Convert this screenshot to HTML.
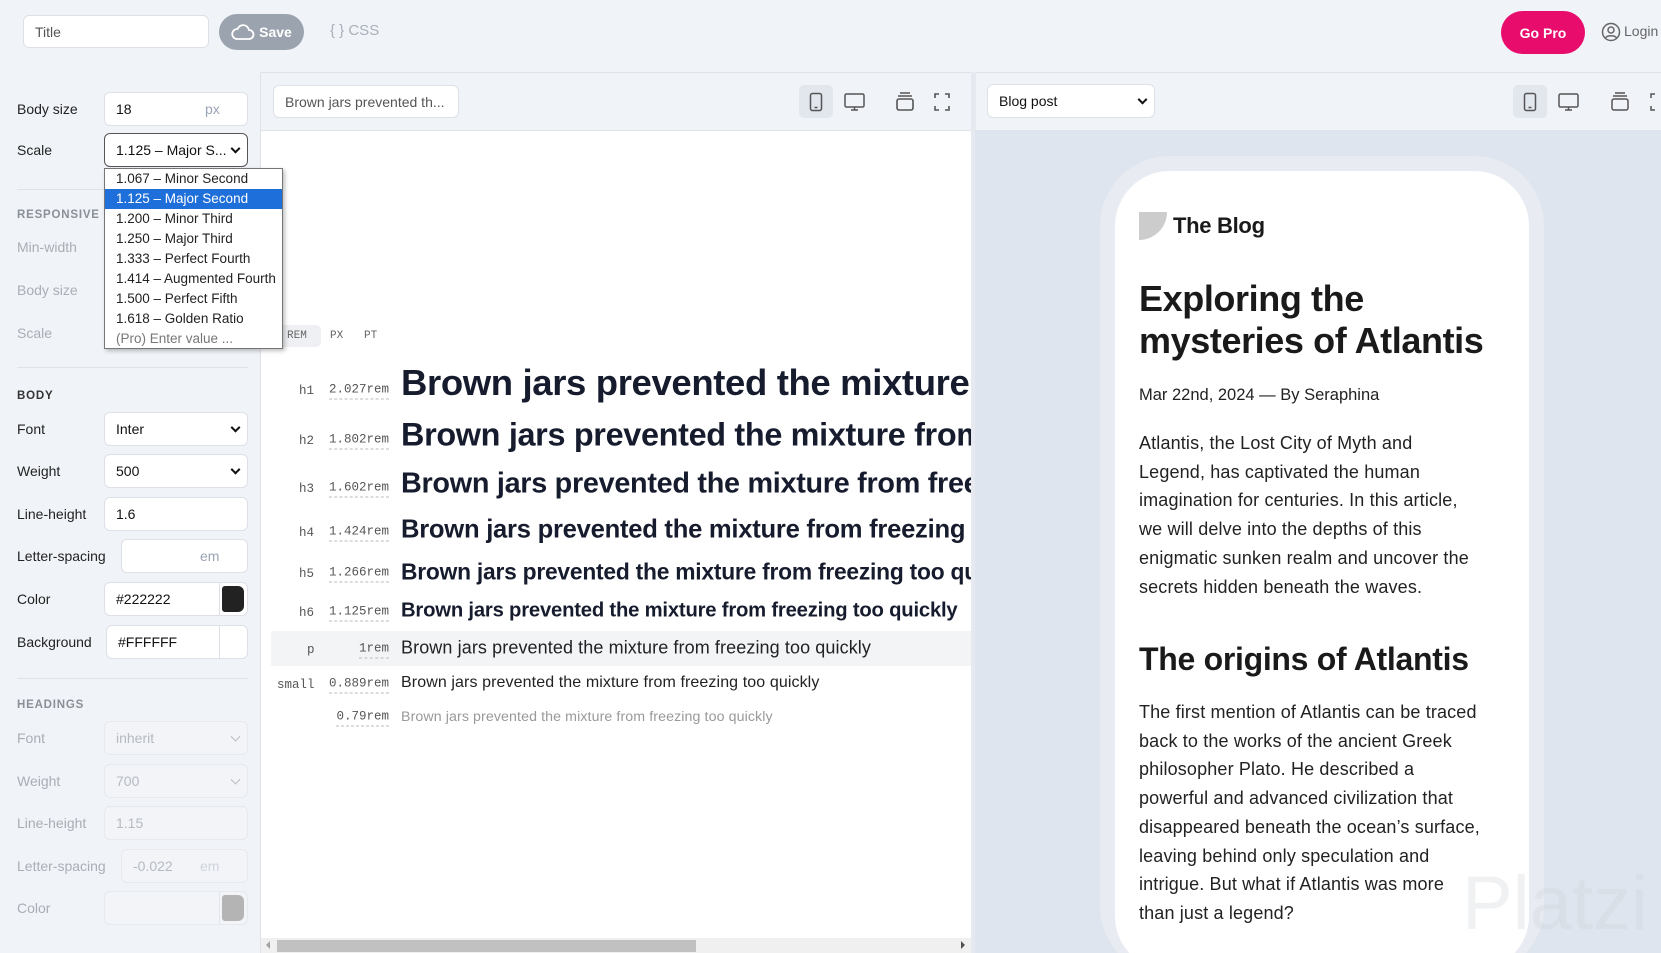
<!DOCTYPE html>
<html style="overflow:hidden;height:953px"><head><meta charset="utf-8"><style>
*{box-sizing:border-box;margin:0;padding:0}
body{width:1661px;height:953px;overflow:hidden;background:#f0f3f8;font-family:"Liberation Sans",sans-serif;position:relative;color:#222}
.abs{position:absolute}
.inp{position:absolute;background:#fff;border:1px solid #dde1e7;border-radius:6px;height:34px;font-size:14px;color:#111;padding:0 11px;display:flex;align-items:center}
.dis{background:#f2f4f8;border-color:#e6e9ee;color:#b5bac2}
.lab{position:absolute;left:17px;font-size:14px;color:#222;transform:translateY(-50%)}
.lab.g{color:#a9aeb6}
.sec{position:absolute;left:17px;font-size:11.5px;letter-spacing:0.8px;font-weight:bold;color:#333}
.hr{position:absolute;left:17px;width:231px;height:1px;background:#dfe3e9}
.chev{position:absolute;right:8px;top:50%;width:7px;height:7px;border-right:2px solid #111;border-bottom:2px solid #111;transform:translateY(-70%) rotate(45deg)}
.dis .chev{border-color:#bbb;border-width:1.5px}
.tag{position:absolute;font-family:"Liberation Mono",monospace;font-size:12.5px;color:#555;transform:translateY(-50%)}
.rem{position:absolute;font-family:"Liberation Mono",monospace;font-size:12.5px;color:#555;right:611px;transform:translateY(-50%);border-bottom:1px dashed #bbb;padding-bottom:2px;white-space:nowrap}
.tx{position:absolute;left:401px;white-space:nowrap;color:#161c2d;transform:translateY(-50%);font-weight:bold;letter-spacing:-0.01em}
.pl{position:absolute;left:1139px;font-size:18px;line-height:28.7px;color:#222;width:390px;letter-spacing:0.15px}
</style></head><body>
<div class="inp" style="left:23px;top:15px;width:186px;height:33px;color:#555;font-size:14px">Title</div>
<div class="abs" style="left:219px;top:14px;width:85px;height:36px;border-radius:18px;background:#9ba3ae;color:#fff;font-weight:bold;font-size:14px;display:flex;align-items:center;justify-content:center;gap:4px">
<svg width="24" height="18" viewBox="0 0 24 18"><path d="M6 16h12a4.5 4.5 0 0 0 0-9 6 6 0 0 0-11.5-1A5 5 0 0 0 6 16z" fill="none" stroke="#fff" stroke-width="1.8"/></svg>Save</div>
<div class="abs" style="left:330px;top:22px;font-size:15px;color:#aab0ba">{ } CSS</div>
<div class="abs" style="left:1501px;top:11px;width:84px;height:43px;border-radius:22px;background:#e80c6c;color:#fff;font-weight:bold;font-size:14px;display:flex;align-items:center;justify-content:center">Go Pro</div>
<svg class="abs" style="left:1601px;top:22px" width="20" height="20" viewBox="0 0 20 20"><circle cx="10" cy="10" r="8.5" fill="none" stroke="#666" stroke-width="1.5"/><circle cx="10" cy="8" r="3" fill="none" stroke="#666" stroke-width="1.5"/><path d="M4.5 16c1.5-3 9.5-3 11 0" fill="none" stroke="#666" stroke-width="1.5"/></svg>
<div class="abs" style="left:1624px;top:23px;font-size:14px;color:#666">Login</div>
<div class="abs" style="left:260px;top:72px;width:1401px;height:1px;background:#dfe3e9"></div>

<div class="lab" style="top:109px">Body size</div>
<div class="inp" style="left:104px;top:92px;width:144px">18<span style="position:absolute;left:100px;color:#9aa3b5">px</span></div>
<div class="lab" style="top:150px">Scale</div>
<div class="inp" style="left:104px;top:133px;width:144px;border-color:#555;border-width:1.5px">1.125 – Major S...<span class="chev"></span></div>
<div class="hr" style="top:189px"></div>
<div class="sec" style="top:209px;color:#8a8f98">RESPONSIVE</div>
<div class="lab g" style="top:247px">Min-width</div>
<div class="lab g" style="top:290px">Body size</div>
<div class="lab g" style="top:333px">Scale</div>
<div class="hr" style="top:367px"></div>
<div class="sec" style="top:390px">BODY</div>
<div class="lab" style="top:429px">Font</div>
<div class="inp" style="left:104px;top:412px;width:144px">Inter<span class="chev"></span></div>
<div class="lab" style="top:471px">Weight</div>
<div class="inp" style="left:104px;top:454px;width:144px">500<span class="chev"></span></div>
<div class="lab" style="top:514px">Line-height</div>
<div class="inp" style="left:104px;top:497px;width:144px">1.6</div>
<div class="lab" style="top:556px">Letter-spacing</div>
<div class="inp" style="left:121px;top:539px;width:127px"><span style="position:absolute;left:78px;color:#9aa3b5">em</span></div>
<div class="lab" style="top:599px">Color</div>
<div class="inp" style="left:104px;top:582px;width:144px">#222222<span style="position:absolute;left:114px;top:-1px;width:1px;height:34px;background:#dde1e7"></span><span style="position:absolute;right:3px;top:3px;width:22px;height:26px;background:#222;border-radius:3px 6px 6px 3px"></span></div>
<div class="lab" style="top:642px">Background</div>
<div class="inp" style="left:106px;top:625px;width:142px">#FFFFFF<span style="position:absolute;left:112px;top:-1px;width:1px;height:34px;background:#dde1e7"></span></div>
<div class="hr" style="top:678px"></div>
<div class="sec" style="top:699px;color:#8a8f98">HEADINGS</div>
<div class="lab g" style="top:738px">Font</div>
<div class="inp dis" style="left:104px;top:721px;width:144px">inherit<span class="chev"></span></div>
<div class="lab g" style="top:781px">Weight</div>
<div class="inp dis" style="left:104px;top:764px;width:144px">700<span class="chev"></span></div>
<div class="lab g" style="top:823px">Line-height</div>
<div class="inp dis" style="left:104px;top:806px;width:144px">1.15</div>
<div class="lab g" style="top:866px">Letter-spacing</div>
<div class="inp dis" style="left:121px;top:849px;width:127px">-0.022<span style="position:absolute;left:78px;color:#d0d5dd">em</span></div>
<div class="lab g" style="top:908px">Color</div>
<div class="inp dis" style="left:104px;top:891px;width:144px"><span style="position:absolute;left:114px;top:-1px;width:1px;height:34px;background:#e3e6eb"></span><span style="position:absolute;right:3px;top:3px;width:22px;height:26px;background:#b4b4b4;border-radius:3px 6px 6px 3px"></span></div>

<div class="abs" style="left:260px;top:72px;width:1px;height:881px;background:#dfe3e9"></div>
<div class="abs" style="left:261px;top:131px;width:710px;height:822px;background:#fff"></div>
<div class="abs" style="left:261px;top:130px;width:710px;height:1px;background:#dfe3e9"></div>
<div class="inp" style="left:273px;top:85px;width:186px;height:33px;color:#555">Brown jars prevented th...</div>
<div class="abs" style="left:799px;top:85px;width:34px;height:33px;background:#e2e7ee;border-radius:5px"></div>
<svg class="abs" style="left:799px;top:85px" width="150" height="33" viewBox="0 0 150 33">
<g fill="none" stroke="#555" stroke-width="1.5">
<rect x="11.5" y="8.5" width="11" height="17" rx="2"/><path d="M15.5 22.5h3"/>
<rect x="46" y="9" width="19" height="13" rx="1.5"/><path d="M52 25h7M55.5 22v3"/>
</g></svg>
<svg class="abs" style="left:890px;top:85px" width="60" height="33" viewBox="0 0 60 33"><g fill="none" stroke="#555" stroke-width="1.6"><rect x="7" y="14" width="16" height="11" rx="2"/><path d="M8 11h14M10 8h10"/><path d="M45 13v-4h4M55 9h4v4M59 21v4h-4M49 25h-4v-4"/></g></svg>
<div class="abs" style="left:271px;top:325px;width:50px;height:22px;background:#eef0f3;border-radius:5px"></div>
<div class="abs" style="left:287px;top:330px;font-family:'Liberation Mono',monospace;font-size:11px;color:#666">REM</div>
<div class="abs" style="left:330px;top:330px;font-family:'Liberation Mono',monospace;font-size:11px;color:#666">PX</div>
<div class="abs" style="left:364px;top:330px;font-family:'Liberation Mono',monospace;font-size:11px;color:#666">PT</div>

<div class="abs" style="left:271px;top:631px;width:700px;height:35px;background:#f3f4f6"></div>
<div class="abs" style="left:261px;top:131px;width:710px;height:807px;overflow:hidden">
<div style="position:absolute;left:-261px;top:-131px;width:1000px;height:1000px">
<span class="tag" style="left:299px;top:391px">h1</span><span class="rem" style="top:391px">2.027rem</span><span class="tx" style="top:383px;font-size:36.5px">Brown jars prevented the mixture from freezing too quickly</span>
<span class="tag" style="left:299px;top:441px">h2</span><span class="rem" style="top:441px">1.802rem</span><span class="tx" style="top:435px;font-size:32.4px">Brown jars prevented the mixture from freezing too quickly</span>
<span class="tag" style="left:299px;top:489px">h3</span><span class="rem" style="top:489px">1.602rem</span><span class="tx" style="top:484px;font-size:28.8px">Brown jars prevented the mixture from freezing too quickly</span>
<span class="tag" style="left:299px;top:533px">h4</span><span class="rem" style="top:533px">1.424rem</span><span class="tx" style="top:530px;font-size:25.6px">Brown jars prevented the mixture from freezing too quickly</span>
<span class="tag" style="left:299px;top:574px">h5</span><span class="rem" style="top:574px">1.266rem</span><span class="tx" style="top:572px;font-size:22.8px">Brown jars prevented the mixture from freezing too quickly</span>
<span class="tag" style="left:299px;top:613px">h6</span><span class="rem" style="top:613px">1.125rem</span><span class="tx" style="top:611px;font-size:20.25px">Brown jars prevented the mixture from freezing too quickly</span>
<span class="tag" style="left:307px;top:650px">p</span><span class="rem" style="top:650px">1rem</span><span class="tx" style="top:648px;font-size:18px;font-weight:normal;letter-spacing:0.1px;color:#222">Brown jars prevented the mixture from freezing too quickly</span>
<span class="tag" style="left:277px;top:685px">small</span><span class="rem" style="top:685px">0.889rem</span><span class="tx" style="top:683px;font-size:16px;font-weight:normal;letter-spacing:0.1px;color:#222">Brown jars prevented the mixture from freezing too quickly</span>
<span class="rem" style="top:718px">0.79rem</span><span class="tx" style="top:717px;font-size:14.2px;font-weight:normal;letter-spacing:0.1px;color:#999">Brown jars prevented the mixture from freezing too quickly</span>
</div></div>
<div class="abs" style="left:261px;top:938px;width:710px;height:15px;background:#f0f0f0"></div>
<div class="abs" style="left:277px;top:940px;width:419px;height:12px;background:#c1c1c1"></div>
<div class="abs" style="left:266px;top:941px;width:0;height:0;border-top:4px solid transparent;border-bottom:4px solid transparent;border-right:4px solid #a3a3a3"></div>
<div class="abs" style="left:961px;top:941px;width:0;height:0;border-top:4px solid transparent;border-bottom:4px solid transparent;border-left:4px solid #505050"></div>

<div class="abs" style="left:104px;top:168px;width:179px;height:181px;background:#fff;border:1px solid #767676;box-shadow:2px 2px 4px rgba(0,0,0,.25);font-size:13.5px;color:#222">
<div style="height:20px;line-height:20px;padding-left:11px">1.067 – Minor Second</div>
<div style="height:20px;line-height:20px;padding-left:11px;background:#1e6fd9;color:#fff">1.125 – Major Second</div>
<div style="height:20px;line-height:20px;padding-left:11px">1.200 – Minor Third</div>
<div style="height:20px;line-height:20px;padding-left:11px">1.250 – Major Third</div>
<div style="height:20px;line-height:20px;padding-left:11px">1.333 – Perfect Fourth</div>
<div style="height:20px;line-height:20px;padding-left:11px;white-space:nowrap">1.414 – Augmented Fourth</div>
<div style="height:20px;line-height:20px;padding-left:11px">1.500 – Perfect Fifth</div>
<div style="height:20px;line-height:20px;padding-left:11px">1.618 – Golden Ratio</div>
<div style="height:20px;line-height:20px;padding-left:11px;color:#777">(Pro) Enter value ...</div>
</div>

<div class="abs" style="left:971px;top:72px;width:5px;height:881px;background:#e6eaf0"></div>
<div class="abs" style="left:975px;top:130px;width:686px;height:823px;background:#dfe5ee;overflow:hidden">
<div class="abs" style="left:125px;top:26px;width:444px;height:820px;background:#e8ecf2;border-radius:70px"></div>
<div class="abs" style="left:140px;top:41px;width:414px;height:800px;background:#fff;border-radius:55px"></div>
<div class="abs" style="left:487px;top:730px;font-size:76px;color:rgba(205,210,216,0.3)">Platzi</div>
</div>
<div class="inp" style="left:987px;top:84px;width:168px;height:34px;font-size:14px">Blog post<span class="chev"></span></div>
<div class="abs" style="left:1513px;top:85px;width:34px;height:33px;background:#e2e7ee;border-radius:5px"></div>
<svg class="abs" style="left:1513px;top:85px" width="148" height="33" viewBox="0 0 148 33"><g fill="none" stroke="#555" stroke-width="1.5">
<rect x="11.5" y="8.5" width="11" height="17" rx="2"/><path d="M15.5 22.5h3"/>
<rect x="46" y="9" width="19" height="13" rx="1.5"/><path d="M52 25h7M55.5 22v3"/>
<rect x="99" y="14" width="16" height="11" rx="2"/><path d="M100 11h14M102 8h10"/>
<path d="M138 13v-4h4M142 25h-4v-4"/></g></svg>
<div class="abs" style="left:1139px;top:212px;width:28px;height:28px;background:#cccccc;border-radius:0 0 0 28px;transform:scaleX(-1)"></div>
<div class="abs" style="left:1173px;top:213px;font-size:22px;font-weight:bold;color:#1a1a1a;letter-spacing:-0.3px">The Blog</div>
<div class="abs" style="left:1139px;top:278px;font-size:36px;line-height:42px;font-weight:bold;color:#1a1a1a;letter-spacing:-0.4px;width:390px">Exploring the mysteries of Atlantis</div>
<div class="abs" style="left:1139px;top:386px;font-size:16.5px;color:#222">Mar 22nd, 2024 — By Seraphina</div>
<div class="pl" style="top:429px">Atlantis, the Lost City of Myth and<br>Legend, has captivated the human<br>imagination for centuries. In this article,<br>we will delve into the depths of this<br>enigmatic sunken realm and uncover the<br>secrets hidden beneath the waves.</div>
<div class="abs" style="left:1139px;top:641px;font-size:32px;font-weight:bold;color:#1a1a1a;letter-spacing:-0.3px">The origins of Atlantis</div>
<div class="pl" style="top:698px">The first mention of Atlantis can be traced<br>back to the works of the ancient Greek<br>philosopher Plato. He described a<br>powerful and advanced civilization that<br>disappeared beneath the ocean’s surface,<br>leaving behind only speculation and<br>intrigue. But what if Atlantis was more<br>than just a legend?</div>
</body></html>
